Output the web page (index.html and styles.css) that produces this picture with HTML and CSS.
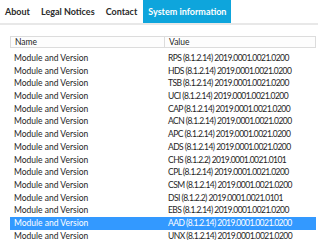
FILE: index.html
```html
<html lang="en">
  <head>
    <meta charset="UTF-8" />
    <title>System information</title>
    <link rel="stylesheet" href="styles.css">
  </head>
  <body>
    <nav class="tabs">
      <a class="tab">About</a>
      <a class="tab">Legal Notices</a>
      <a class="tab">Contact</a>
      <a class="tab active">System information</a>
    </nav>
    <section class="panel">
      <div class="grid">
        <div class="head">
          <div class="cell">Name</div>
          <div class="cell">Value</div>
        </div>
        <div class="rows">
          <div class="row"><div class="cell">Module and Version</div><div class="cell">RPS (8.1.2.14) 2019.0001.0021.0200</div></div>
          <div class="row"><div class="cell">Module and Version</div><div class="cell">HDS (8.1.2.14) 2019.0001.0021.0200</div></div>
          <div class="row"><div class="cell">Module and Version</div><div class="cell">TSB (8.1.2.14) 2019.0001.0021.0200</div></div>
          <div class="row"><div class="cell">Module and Version</div><div class="cell">UCI (8.1.2.14) 2019.0001.0021.0200</div></div>
          <div class="row"><div class="cell">Module and Version</div><div class="cell">CAP (8.1.2.14) 2019.0001.0021.0200</div></div>
          <div class="row"><div class="cell">Module and Version</div><div class="cell">ACN (8.1.2.14) 2019.0001.0021.0200</div></div>
          <div class="row"><div class="cell">Module and Version</div><div class="cell">APC (8.1.2.14) 2019.0001.0021.0200</div></div>
          <div class="row"><div class="cell">Module and Version</div><div class="cell">ADS (8.1.2.14) 2019.0001.0021.0200</div></div>
          <div class="row"><div class="cell">Module and Version</div><div class="cell">CHS (8.1.2.2) 2019.0001.0021.0101</div></div>
          <div class="row"><div class="cell">Module and Version</div><div class="cell">CPL (8.1.2.14) 2019.0001.0021.0200</div></div>
          <div class="row"><div class="cell">Module and Version</div><div class="cell">CSM (8.1.2.14) 2019.0001.0021.0200</div></div>
          <div class="row"><div class="cell">Module and Version</div><div class="cell">DSI (8.1.2.2) 2019.0001.0021.0101</div></div>
          <div class="row"><div class="cell">Module and Version</div><div class="cell">EBS (8.1.2.14) 2019.0001.0021.0200</div></div>
          <div class="row selected"><div class="cell">Module and Version</div><div class="cell">AAD (8.1.2.14) 2019.0001.0021.0200</div></div>
          <div class="row"><div class="cell">Module and Version</div><div class="cell">UNX (8.1.2.14) 2019.0001.0021.0200</div></div>
        </div>
      </div>
    </section>
  </body>
</html>
```
FILE: styles.css
```css
body {
  margin: 0;
  background: #fff;
  color: #1e1e1e;
  font-family: Lato, "Noto Sans", sans-serif;
  font-size: 8.5px;
}
.tabs {
  display: flex;
  height: 23px;
  border-bottom: 2px solid #e8e8e8;
}
.tab {
  padding: 0 5px;
  line-height: 23px;
  font-weight: 700;
  font-size: 9px;
  color: #2a2a2a;
}
.tab + .tab {
  margin-left: 1px;
}
.active {
  background-color: #0ea5dc;
  color: #fff;
}
.panel {
  padding: 11px 2px 0 10px;
}
.head {
  display: grid;
  grid-template-columns: 153px 1fr;
  height: 10px;
  border: 1px solid #dcdcdc;
  background: #fdfdfd;
  line-height: 10px;
}
.head .cell + .cell {
  border-left: 1px solid #dcdcdc;
}
.rows {
  padding-top: 4px;
}
.row {
  display: grid;
  grid-template-columns: 154px 1fr;
  height: 12.7px;
  line-height: 12.7px;
}
.cell {
  padding-left: 4px;
  white-space: nowrap;
  overflow: hidden;
}
.row .cell + .cell {
  letter-spacing: -0.55px;
}
.selected {
  background-color: #3399ff;
  color: #fff;
}
```
